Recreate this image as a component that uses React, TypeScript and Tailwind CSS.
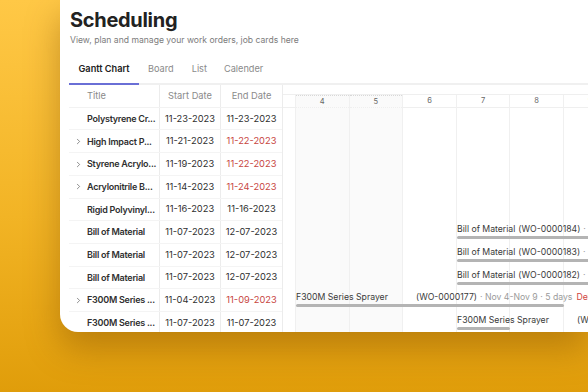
import { ChevronRight } from "lucide-react";

interface Row {
  title: string;
  start: string;
  end: string;
  late?: boolean;
  expandable?: boolean;
}

const rows: Row[] = [
  { title: "Polystyrene Cr...", start: "11-23-2023", end: "11-23-2023" },
  { title: "High Impact P...", start: "11-21-2023", end: "11-22-2023", late: true, expandable: true },
  { title: "Styrene Acrylo...", start: "11-19-2023", end: "11-22-2023", late: true, expandable: true },
  { title: "Acrylonitrile B...", start: "11-14-2023", end: "11-24-2023", late: true, expandable: true },
  { title: "Rigid Polyvinyl...", start: "11-16-2023", end: "11-16-2023" },
  { title: "Bill of Material", start: "11-07-2023", end: "12-07-2023" },
  { title: "Bill of Material", start: "11-07-2023", end: "12-07-2023" },
  { title: "Bill of Material", start: "11-07-2023", end: "12-07-2023" },
  { title: "F300M Series ...", start: "11-04-2023", end: "11-09-2023", late: true, expandable: true },
  { title: "F300M Series ...", start: "11-07-2023", end: "11-07-2023" },
];

const days = [
  { n: "", w: "w-[13px]", weekend: false },
  { n: "4", w: "w-[53.6px]", weekend: true },
  { n: "5", w: "w-[53.6px]", weekend: true },
  { n: "6", w: "w-[53.6px]", weekend: false },
  { n: "7", w: "w-[53.6px]", weekend: false },
  { n: "8", w: "w-[53.6px]", weekend: false },
  { n: "9", w: "w-[53.6px]", weekend: false },
];

// bars: left offset from timeline start, width in px
const bars: Record<number, { left: number; width: number; name: string; wo: string; gap?: boolean; extra?: boolean }> = {
  5: { left: 174, width: 200, name: "Bill of Material", wo: "(WO-0000184)" },
  6: { left: 174, width: 200, name: "Bill of Material", wo: "(WO-0000183)" },
  7: { left: 174, width: 200, name: "Bill of Material", wo: "(WO-0000182)" },
  8: { left: 13, width: 268, name: "F300M Series Sprayer", wo: "(WO-0000177)", gap: true, extra: true },
  9: { left: 174, width: 53, name: "F300M Series Sprayer", wo: "(WO-0000176)", gap: true },
};

export default function App() {
  return (
    <div className="w-[588px] h-[392px] overflow-hidden bg-[linear-gradient(180deg,#ffc846_0%,#f2b425_55%,#e09d0a_100%)] pl-[60px] font-['Inter',sans-serif]">
      <div className="h-[332px] bg-white rounded-bl-[18px] overflow-hidden shadow-[0_16px_34px_rgba(120,70,0,0.4)] flex flex-col">
        <div className="pl-[10px] pt-[6px]">
          <h1 className="text-[20px] leading-[28px] font-bold text-[#222] tracking-[-0.3px]">Scheduling</h1>
          <p className="text-[8.6px] leading-[12px] text-[#7b7b7b]">View, plan and manage your work orders, job cards here</p>
        </div>

        {/* Tabs */}
        <div className="ml-[9px] mt-[16px] flex border-b-2 border-[#f0f0f0] text-[9.2px]">
          <div className="w-[70px] text-center pb-[7px] font-semibold text-[#222] border-b-2 border-[#6a6fd6] -mb-[2px]">Gantt Chart</div>
          <div className="pl-[9px] pb-[7px] text-[#8a8a8a]">Board</div>
          <div className="pl-[18px] pb-[7px] text-[#8a8a8a]">List</div>
          <div className="pl-[17px] pb-[7px] text-[#8a8a8a]">Calender</div>
        </div>

        {/* Gantt */}
        <div className="ml-[9px] flex text-[9.3px] min-h-0">
          {/* Left table */}
          <div className="w-[214px] shrink-0 border-r border-[#ececec]">
            <div className="flex h-[23px] items-center text-[#8a8a8a] border-b border-[#f2f2f2]">
              <div className="w-[91px] pl-[18px] border-r border-[#ececec] h-full flex items-center">Title</div>
              <div className="w-[61px] border-r border-[#ececec] h-full flex items-center justify-center">Start Date</div>
              <div className="flex-1 h-full flex items-center justify-center">End Date</div>
            </div>
            {rows.map((r, i) => (
              <div key={i} className="flex h-[22.7px] items-center border-b border-[#f4f4f4] text-[#2f2f2f]">
                <div className="w-[91px] h-full flex items-center border-r border-[#ececec] overflow-hidden">
                  <div className="w-[18px] shrink-0 flex justify-center">
                    {r.expandable && <ChevronRight size={9} strokeWidth={1.6} className="text-[#444]" />}
                  </div>
                  <span className="font-semibold whitespace-nowrap text-[9px] tracking-[-0.25px]">{r.title}</span>
                </div>
                <div className="w-[61px] h-full flex items-center justify-center border-r border-[#ececec]">{r.start}</div>
                <div className={`flex-1 h-full flex items-center justify-center ${r.late ? "text-[#c8463f]" : ""}`}>{r.end}</div>
              </div>
            ))}
          </div>

          {/* Timeline */}
          <div className="flex-1 relative overflow-hidden">
            <div className="h-[10px] border-b border-[#efefef]" />
            <div className="absolute top-[10px] bottom-0 left-0 flex">
              {days.map((d, i) => (
                <div
                  key={i}
                  className={`${d.w} shrink-0 h-full flex flex-col border-r border-[#f0f0f0] ${d.weekend ? "bg-[#fafafa]" : ""}`}
                >
                  <div className={`h-[13px] flex items-center justify-center text-[7.5px] text-[#666] border-b border-[#efefef] ${d.weekend ? "border-t border-dotted border-t-[#d8d8d8]" : ""}`}>
                    {d.n}
                  </div>
                </div>
              ))}
            </div>
            <div className="relative pt-[13px]">
              {rows.map((_, i) => {
                const b = bars[i];
                return (
                  <div key={i} className="h-[22.7px] relative">
                    {b && (
                      <div className="absolute top-[2px]" style={{ left: b.left }}>
                        <div className="flex whitespace-nowrap text-[#3a3a3a] text-[8.7px] leading-[12px]">
                          <span className={b.gap ? "w-[120px]" : "mr-[3px]"}>{b.name}</span>
                          <span>{b.wo}</span>
                          {b.extra ? (
                            <>
                              <span className="text-[#9a9a9a] ml-[3px]">· Nov 4-Nov 9 · 5 days</span>
                              <span className="text-[#d0453d] ml-[4px]">Delayed</span>
                            </>
                          ) : (
                            <span className="text-[#9a9a9a] ml-[3px]">· Nov 7-Dec 7 · 30 days</span>
                          )}
                        </div>
                        <div className="h-[3px] rounded-full bg-[#b4b4b4] mt-[1px]" style={{ width: b.width }} />
                      </div>
                    )}
                  </div>
                );
              })}
            </div>
          </div>
        </div>
      </div>
    </div>
  );
}
